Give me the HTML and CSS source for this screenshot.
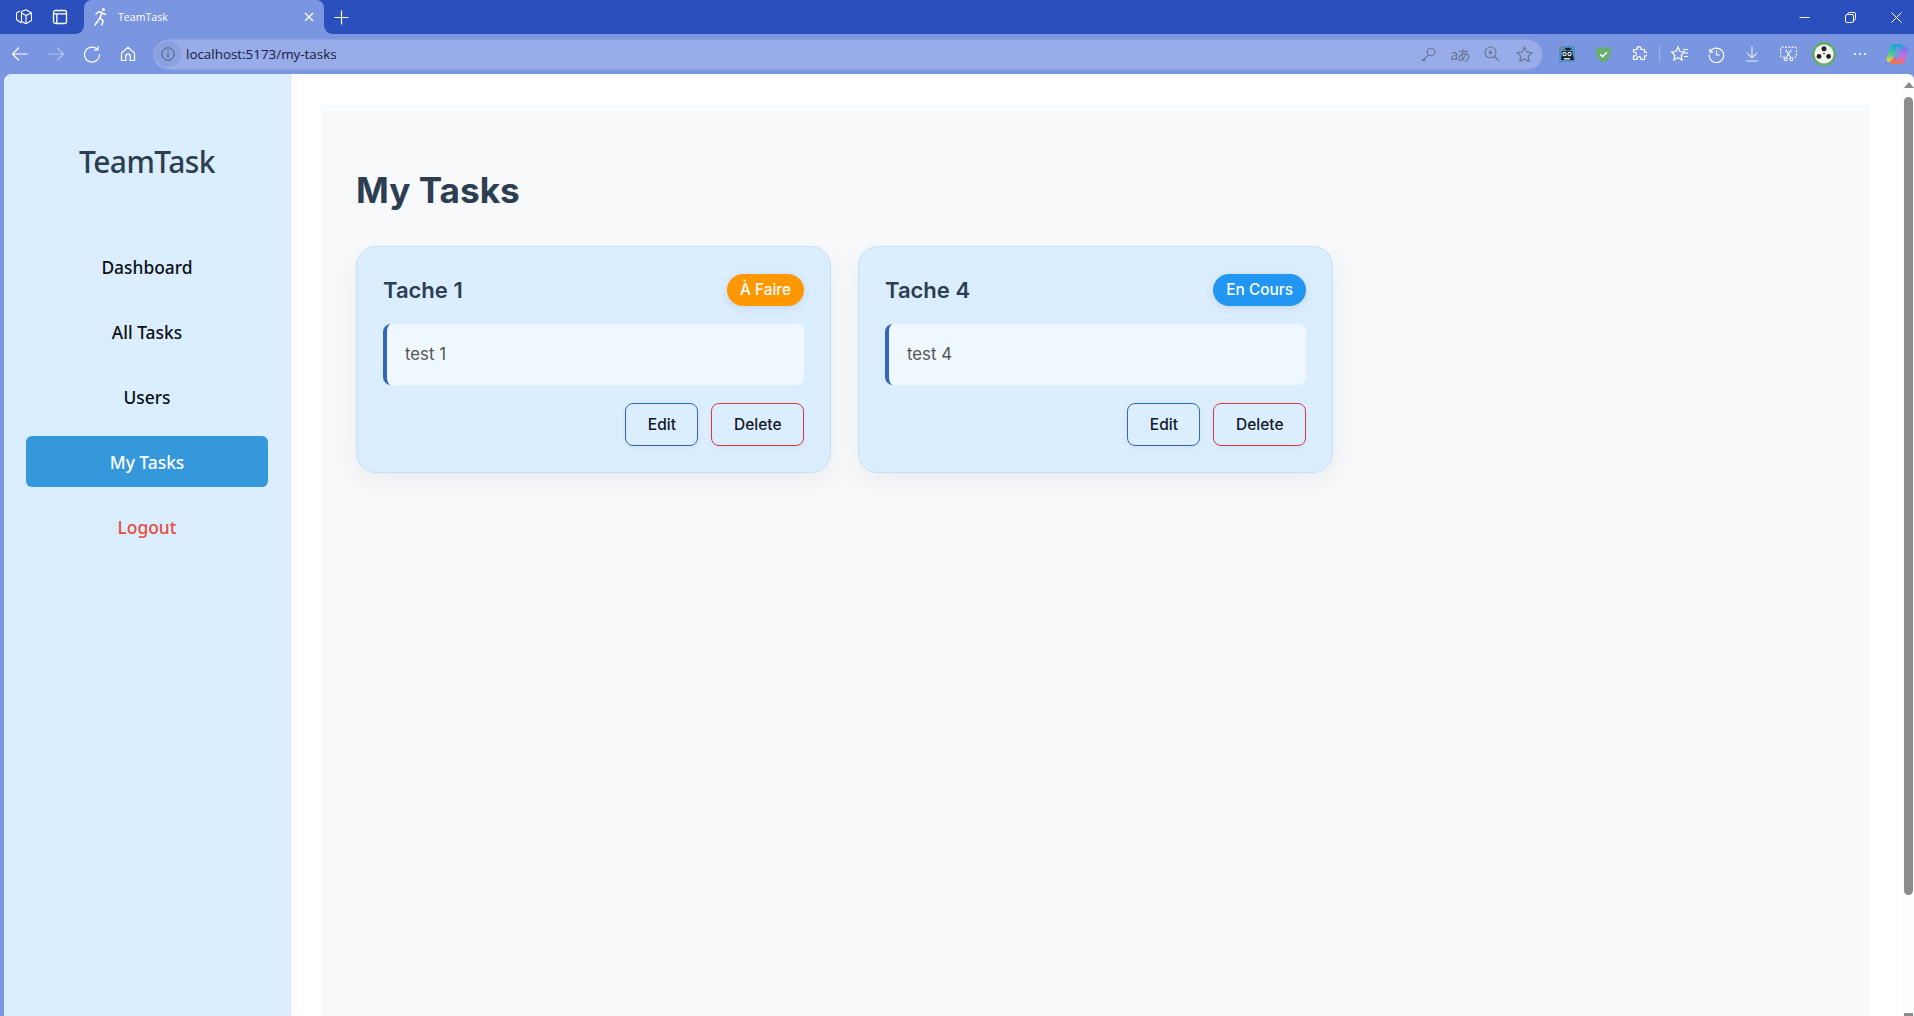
FILE: index.html
```html
<!DOCTYPE html>
<html lang="en">
	<head>
		<meta charset="UTF-8" />
		<meta name="viewport" content="width=device-width, initial-scale=1.0" />
		<title>TeamTask</title>
		<link rel="stylesheet" href="styles.css">
	</head>
	<body>
		<div class="tabstrip">
			<span class="strip-btn first">
				<svg width="18" height="18" viewBox="0 0 18 18" fill="none" stroke="#fff" stroke-width="1.1" stroke-linejoin="round">
					<path d="M6.5 3.5 L11 1.8 L16.5 5 V12.5 L11 15.8 L6.5 13.5 Z" />
					<path d="M11 15.8 V7.5 L16.5 5 M11 7.5 L6.5 5" />
					<path d="M5 3 L1.5 5 V11.5 L6.5 15" />
				</svg>
			</span>
			<span class="strip-btn second">
				<svg width="16" height="16" viewBox="0 0 16 16" fill="none" stroke="#fff" stroke-width="1.3">
					<rect x="1.5" y="1.5" width="13" height="13" rx="2" />
					<path d="M1.5 4.8 H14.5 M4.8 4.8 V14.5" />
				</svg>
			</span>
			<div class="tab">
				<svg class="tab-icon" width="14" height="20" viewBox="0 0 14 20" fill="none" stroke="#fff" stroke-width="1.5" stroke-linecap="round">
					<circle cx="10.5" cy="2.6" r="1.5" fill="#fff" stroke="none" />
					<path d="M3 7 L6 4.5 L9 5.5 L7 11 L2 18" />
					<path d="M9 6 L12.5 7.5 M7 11 L10 13.5 L9 18" />
				</svg>
				<span class="tab-title">TeamTask</span>
				<svg width="10" height="10" viewBox="0 0 10 10" stroke="#fff" stroke-width="1.2">
					<path d="M1 1 L9 9 M9 1 L1 9" />
				</svg>
			</div>
			<span class="new-tab">
				<svg width="15" height="15" viewBox="0 0 15 15" stroke="#fff" stroke-width="1.2">
					<path d="M7.5 0.5 V14.5 M0.5 7.5 H14.5" />
				</svg>
			</span>
			<div class="window-btns">
				<svg width="11" height="11" viewBox="0 0 11 11" stroke="#fff" stroke-width="1">
					<path d="M0.5 5.5 H10.5" />
				</svg>
				<svg width="11" height="11" viewBox="0 0 11 11" fill="none" stroke="#fff" stroke-width="1">
					<rect x="0.5" y="2.5" width="8" height="8" rx="1.5" />
					<path d="M3 2.5 V1.8 A1.3 1.3 0 0 1 4.3 0.5 H9 A1.5 1.5 0 0 1 10.5 2 V6.7 A1.3 1.3 0 0 1 8.5 8" />
				</svg>
				<svg width="11" height="11" viewBox="0 0 11 11" stroke="#fff" stroke-width="1">
					<path d="M0.5 0.5 L10.5 10.5 M10.5 0.5 L0.5 10.5" />
				</svg>
			</div>
		</div>

		<div class="toolbar">
			<span class="tool-btn">
				<svg width="18" height="18" viewBox="0 0 18 18" fill="none" stroke="#fff" stroke-width="1.2">
					<path d="M1.5 9 H16.5 M8 2.5 L1.5 9 L8 15.5" />
				</svg>
			</span>
			<span class="tool-btn">
				<svg width="18" height="18" viewBox="0 0 18 18" fill="none" stroke="#b4c3ee" stroke-width="1.2">
					<path d="M1.5 9 H16.5 M10 2.5 L16.5 9 L10 15.5" />
				</svg>
			</span>
			<span class="tool-btn">
				<svg width="18" height="18" viewBox="0 0 18 18" fill="none" stroke="#fff" stroke-width="1.2">
					<path d="M14.5 4.5 A7.5 7.5 0 1 0 16.5 9" />
					<path d="M15 1 V5 H11" />
				</svg>
			</span>
			<span class="tool-btn">
				<svg width="16" height="16" viewBox="0 0 16 16" fill="none" stroke="#fff" stroke-width="1.2">
					<path d="M1.5 7 L8 1.2 L14.5 7 V14.5 H10.2 V10 A2.2 2.2 0 0 0 5.8 10 V14.5 H1.5 Z" />
				</svg>
			</span>
			<div class="address-bar">
				<span class="site-info">
					<svg width="14" height="14" viewBox="0 0 14 14" fill="none" stroke="#4a5778" stroke-width="1">
						<circle cx="7" cy="7" r="6.2" />
						<path d="M7 6 V10.5 M7 3.5 V4.8" />
					</svg>
				</span>
				<span class="url">localhost:5173/my-tasks</span>
				<div class="address-icons">
					<span class="addr-slot">
						<svg width="15" height="15" viewBox="0 0 15 15" fill="none" stroke="#68748f" stroke-width="1.1">
							<circle cx="10" cy="5" r="3.8" />
							<path d="M7.2 7.8 L1.5 13.5 H3.5 L4.5 12 M10.5 4.5 h0.1" />
						</svg>
					</span>
					<span class="addr-slot translate-glyph">aあ</span>
					<span class="addr-slot">
						<svg width="16" height="16" viewBox="0 0 16 16" fill="none" stroke="#68748f" stroke-width="1.1">
							<circle cx="6.5" cy="6.5" r="5.5" />
							<path d="M10.5 10.5 L15 15 M6.5 4 V9 M4 6.5 H9" />
						</svg>
					</span>
					<span class="addr-slot">
						<svg width="17" height="17" viewBox="0 0 17 17" fill="none" stroke="#68748f" stroke-width="1.1">
							<path d="M8.5 1 L10.8 6 L16 6.6 L12.2 10.2 L13.2 15.6 L8.5 12.9 L3.8 15.6 L4.8 10.2 L1 6.6 L6.2 6 Z" />
						</svg>
					</span>
				</div>
			</div>
			<div class="ext-icons">
				<span class="ext-slot">
					<svg width="16" height="16" viewBox="0 0 16 16">
						<rect width="16" height="16" fill="#4a93c4" />
						<path d="M3 5 H13 L15 14 H2 Z" fill="#1d2230" />
						<circle cx="5.5" cy="8" r="2.2" fill="#dfe6ee" />
						<circle cx="10.5" cy="8" r="2.2" fill="#dfe6ee" />
						<circle cx="5.5" cy="8" r="1" fill="#111" />
						<circle cx="10.5" cy="8" r="1" fill="#111" />
						<path d="M5 3 L9 1.5 L13 3 L9 4.5 Z" fill="#111" />
						<rect x="1.5" y="1" width="2" height="2" fill="#e8642c" />
						<rect x="5" y="12" width="6" height="1.5" fill="#dfe6ee" />
					</svg>
				</span>
				<span class="ext-slot">
					<svg width="17" height="17" viewBox="0 0 16 16">
						<path d="M8 1 C5 1 2.5 2 0.5 3 C0.5 9 3 13.5 8 15.5 C13 13.5 15.5 9 15.5 3 C13.5 2 11 1 8 1 Z" fill="#68ae6f" />
						<path d="M4.8 7.8 L7.2 10 L11.2 5.8" fill="none" stroke="#fff" stroke-width="1.4" />
					</svg>
				</span>
				<span class="ext-slot">
					<svg width="16" height="16" viewBox="0 0 16 16" fill="none" stroke="#fff" stroke-width="1.2" stroke-linejoin="round">
						<path d="M2.5 3.5 H6.2 A2 2 0 1 1 9.8 3.5 H13.5 V6.2 A2 2 0 1 1 13.5 9.8 V13.5 H9.8 A2 2 0 1 0 6.2 13.5 H2.5 V9.8 A2 2 0 1 0 2.5 6.2 Z" />
					</svg>
				</span>
				<span class="tool-divider"></span>
				<span class="ext-slot">
					<svg width="18" height="16" viewBox="0 0 18 16" fill="none" stroke="#fff" stroke-width="1.2">
						<path d="M7 1 L9 5.5 L13.5 6 L10.2 9.2 L11 14 L7 11.6 L3 14 L3.8 9.2 L0.5 6 L5 5.5 Z" />
						<path d="M12 3.5 H17 M14 7 H17 M13 10.5 H17" />
					</svg>
				</span>
				<span class="ext-slot">
					<svg width="17" height="17" viewBox="0 0 18 18" fill="none" stroke="#fff" stroke-width="1.2">
						<path d="M2 3 V6.5 H5.5 M2.2 6.2 A7.7 7.7 0 1 1 1.3 9" />
						<path d="M9 4.8 V9.5 H12.5" />
					</svg>
				</span>
				<span class="ext-slot">
					<svg width="14" height="16" viewBox="0 0 14 16" fill="none" stroke="#dfe6fa" stroke-width="1.2">
						<path d="M7 0.5 V11.5 M2 6.8 L7 11.8 L12 6.8 M1 15 H13" />
					</svg>
				</span>
				<span class="ext-slot">
					<svg width="17" height="16" viewBox="0 0 18 16" fill="none" stroke="#fff" stroke-width="1.1">
						<path d="M5 11.5 H2 A1.3 1.3 0 0 1 0.7 10.2 V2 A1.3 1.3 0 0 1 2 0.7 H16 A1.3 1.3 0 0 1 17.3 2 V10.2 A1.3 1.3 0 0 1 16 11.5 H13" stroke-dasharray="2.2 1.4" />
						<path d="M6 3.5 L11.5 12 M12 3.5 L6.5 12" />
						<circle cx="6" cy="13.5" r="1.6" />
						<circle cx="12" cy="13.5" r="1.6" />
					</svg>
				</span>
				<span class="ext-slot">
					<svg width="24" height="24" viewBox="0 0 24 24">
						<circle cx="12" cy="12" r="12" fill="#62ab69" />
						<circle cx="12" cy="12" r="9.6" fill="#f5f5f2" />
						<circle cx="12" cy="6.7" r="2.5" fill="#222" />
						<circle cx="7" cy="14.4" r="2.4" fill="#222" />
						<circle cx="16.6" cy="14.4" r="2.4" fill="#222" />
						<circle cx="12" cy="11.5" r="0.9" fill="#555" />
					</svg>
				</span>
				<span class="ext-slot">
					<svg width="14" height="4" viewBox="0 0 14 4" fill="#fff">
						<circle cx="2" cy="2" r="1.1" />
						<circle cx="7" cy="2" r="1.1" />
						<circle cx="12" cy="2" r="1.1" />
					</svg>
				</span>
				<span class="ext-slot copilot">
					<svg width="23" height="22" viewBox="0 0 23 22">
						<defs>
							<linearGradient id="copilotLeft" x1="0.6" y1="0" x2="0.2" y2="1">
								<stop offset="0" stop-color="#1a9fe0" />
								<stop offset="0.55" stop-color="#3cc6a0" />
								<stop offset="1" stop-color="#f4cf3a" />
							</linearGradient>
							<linearGradient id="copilotRight" x1="0.6" y1="0" x2="0.3" y2="1">
								<stop offset="0" stop-color="#6f7cf2" />
								<stop offset="0.5" stop-color="#d565d8" />
								<stop offset="1" stop-color="#f6703f" />
							</linearGradient>
						</defs>
						<path d="M7 1 H14 C16 1 17 2.2 17.6 4 L19 8 H14 L13 4.8 C12.6 3.6 11.8 3.2 11 3.8 L7 16 C6.4 17.8 5 19 3 19 C1 19 0.2 17 0.8 15 L4 4 C4.5 2 5.5 1 7 1 Z" fill="url(#copilotLeft)" />
						<path d="M15 6 C16 4.4 17.2 3.6 19 3.6 C21.4 3.6 22.6 5.4 22 7.6 L19 18 C18.5 20 17.4 21 15.6 21 H7 C5 21 4.4 19.4 5 18 L8 14 H10 L11 17 C11.4 18.2 12.4 18.4 13 17.4 Z" fill="url(#copilotRight)" />
					</svg>
				</span>
			</div>
		</div>

		<div class="viewport">
			<div class="page">
				<aside class="sidebar">
					<h2 class="brand">TeamTask</h2>
					<nav class="nav">
						<a class="nav-link">Dashboard</a>
						<a class="nav-link">All Tasks</a>
						<a class="nav-link">Users</a>
						<a class="nav-link active">My Tasks</a>
						<a class="nav-link logout">Logout</a>
					</nav>
				</aside>
				<main class="main">
					<div class="panel">
						<h1 class="page-title">My Tasks</h1>
						<div class="task-grid">
							<div class="task-card">
								<div class="task-head">
									<h3 class="task-title">Tache 1</h3>
									<span class="badge todo">À Faire</span>
								</div>
								<p class="task-desc">test 1</p>
								<div class="task-actions">
									<button class="btn edit">Edit</button>
									<button class="btn delete">Delete</button>
								</div>
							</div>
							<div class="task-card">
								<div class="task-head">
									<h3 class="task-title">Tache 4</h3>
									<span class="badge doing">En Cours</span>
								</div>
								<p class="task-desc">test 4</p>
								<div class="task-actions">
									<button class="btn edit">Edit</button>
									<button class="btn delete">Delete</button>
								</div>
							</div>
						</div>
					</div>
				</main>
			</div>
			<div class="scrollbar">
				<span class="scroll-up"></span>
				<span class="scroll-thumb"></span>
				<span class="scroll-down"></span>
			</div>
		</div>
	</body>
</html>
```

FILE: styles.css
```css
:root {
	--strip-blue: #2b50bd;
	--frame-blue: #7b96e1;
	--sidebar-blue: #dbeeff;
	--ink: #2c3e50;
}

* {
	box-sizing: border-box;
	margin: 0;
	padding: 0;
}

html,
body {
	height: 100%;
	overflow: hidden;
}

body {
	display: flex;
	flex-direction: column;
	font-family: Inter, "Liberation Sans", sans-serif;
	background-color: var(--frame-blue);
}

/* browser chrome */

.tabstrip {
	display: flex;
	align-items: center;
	height: 34px;
	background-color: var(--strip-blue);
}

.strip-btn {
	display: flex;
}

.strip-btn.first {
	margin-left: 15px;
}

.strip-btn.second {
	margin-left: 19px;
}

.tab {
	position: relative;
	display: flex;
	align-items: center;
	width: 240px;
	height: 34px;
	margin-left: 16px;
	padding: 0 10px 0 9px;
	background-color: var(--frame-blue);
	border-radius: 8px 8px 0 0;
}

.tab::before,
.tab::after {
	content: "";
	position: absolute;
	bottom: 0;
	width: 8px;
	height: 8px;
}

.tab::before {
	left: -8px;
	background: radial-gradient(circle at 0 0, var(--strip-blue) 7.5px, var(--frame-blue) 8px);
}

.tab::after {
	right: -8px;
	background: radial-gradient(circle at 100% 0, var(--strip-blue) 7.5px, var(--frame-blue) 8px);
}

.tab-title {
	flex: 1;
	margin-left: 11px;
	font-family: "Open Sans", sans-serif;
	font-size: 10.6px;
	color: #fff;
}

.new-tab {
	display: flex;
	margin-left: 10px;
}

.window-btns {
	display: flex;
	gap: 35px;
	margin-left: auto;
	padding-right: 12px;
}

.toolbar {
	display: flex;
	align-items: center;
	height: 40px;
	padding-left: 2px;
	background-color: var(--frame-blue);
}

.tool-btn {
	display: flex;
	justify-content: center;
	width: 36px;
}

.address-bar {
	display: flex;
	align-items: center;
	flex: none;
	width: 1390px;
	height: 31px;
	margin-left: 7px;
	background-color: #97ace8;
	border: 1px solid #8ba1e0;
	border-radius: 16px;
}

.site-info {
	display: flex;
	justify-content: center;
	align-items: center;
	width: 26px;
	height: 26px;
	margin-left: 1px;
	background-color: #8aa0df;
	border-radius: 50%;
}

.url {
	margin-left: 5px;
	font-family: "Open Sans", sans-serif;
	font-size: 13.4px;
	color: #14213d;
}

.address-icons {
	display: flex;
	align-items: center;
	margin-left: auto;
	padding-right: 2px;
}

.addr-slot {
	display: flex;
	justify-content: center;
	align-items: center;
	width: 32px;
}

.translate-glyph {
	font-family: "Noto Sans CJK JP", sans-serif;
	font-size: 13.5px;
	letter-spacing: -1px;
	color: #68748f;
}

.ext-icons {
	display: flex;
	align-items: center;
	flex: 1;
	padding-left: 6px;
}

.ext-slot {
	display: flex;
	flex: none;
	justify-content: center;
	width: 36px;
}

.ext-slot.copilot {
	width: 34px;
	margin-left: 2px;
}

.tool-divider {
	flex: none;
	width: 1px;
	height: 16px;
	margin: 0 2px;
	background-color: #9fb2ea;
}

.viewport {
	display: flex;
	flex: 1;
	min-height: 0;
	padding-left: 4px;
}

.page {
	display: flex;
	flex: 1;
	min-width: 0;
	background-color: #fff;
	border-top-left-radius: 8px;
	overflow: hidden;
}

.scrollbar {
	display: flex;
	flex-direction: column;
	align-items: center;
	width: 13px;
	padding-left: 2px;
	background-color: #fdfdfd;
	border-top-right-radius: 6px;
}

.scroll-up {
	width: 0;
	height: 0;
	margin-top: 8px;
	border-left: 5px solid transparent;
	border-right: 5px solid transparent;
	border-bottom: 6px solid #8c8c8c;
}

.scroll-thumb {
	width: 9px;
	height: 798px;
	margin-top: 9px;
	background-color: #8c8c8c;
	border-radius: 5px;
}

.scroll-down {
	width: 9px;
	height: 3px;
	margin-top: auto;
	background-color: #8c8c8c;
}

/* sidebar */

.sidebar {
	flex: none;
	width: 287px;
	padding: 0 22px;
	background-color: var(--sidebar-blue);
	border-right: 1px solid #e2e4e8;
	box-shadow: 2px 0 8px rgba(0, 0, 0, 0.04);
	font-family: "Noto Sans", sans-serif;
}

.brand {
	margin-top: 66px;
	font-size: 30px;
	font-weight: 500;
	letter-spacing: -0.55px;
	line-height: 44px;
	text-align: center;
	color: var(--ink);
}

.nav {
	display: flex;
	flex-direction: column;
	gap: 14px;
	margin-top: 57px;
}

.nav-link {
	display: block;
	height: 51px;
	font-size: 17.4px;
	font-weight: 500;
	line-height: 53px;
	text-align: center;
	color: #0b0f14;
	border-radius: 6px;
}

.nav-link.active {
	color: #fff;
	background-color: #3498db;
}

.nav-link.logout {
	color: #e74c3c;
}

/* main */

.main {
	flex: 1;
	min-width: 0;
	padding: 31px 31px 0 30px;
}

.panel {
	height: 100%;
	padding: 63px 35px 35px;
	background-color: #f8f9fa;
}

.page-title {
	font-size: 35.2px;
	font-weight: 700;
	line-height: 44px;
	color: var(--ink);
}

.task-grid {
	display: grid;
	grid-template-columns: repeat(auto-fill, 475px);
	gap: 27px;
	margin-top: 34px;
}

.task-card {
	padding: 27px 26px 26px;
	background-color: #dbeeff;
	border: 1px solid #c4e0f9;
	border-radius: 20px;
	box-shadow: 0 8px 24px rgba(0, 0, 0, 0.06);
}

.task-head {
	display: flex;
	align-items: center;
	justify-content: space-between;
}

.task-title {
	font-size: 22px;
	font-weight: 600;
	line-height: 31px;
	color: var(--ink);
}

.badge {
	padding: 0 13px;
	font-size: 15.4px;
	font-weight: 500;
	line-height: 32px;
	color: #fff;
	border-radius: 16px;
	box-shadow: 0 2px 8px rgba(0, 0, 0, 0.1);
}

.badge.todo {
	background-color: #ff9800;
}

.badge.doing {
	background-color: #2196f3;
}

.task-desc {
	height: 61px;
	margin-top: 18px;
	padding: 0 18px;
	font-size: 16.8px;
	line-height: 61px;
	color: #555;
	background-color: #f0f8ff;
	border-left: 4px solid #3366b8;
	border-radius: 8px;
}

.task-actions {
	display: flex;
	justify-content: flex-end;
	gap: 13px;
	margin-top: 18px;
}

.btn {
	height: 43px;
	padding: 0 21.5px;
	font-family: inherit;
	font-size: 15.5px;
	font-weight: 450;
	color: #14181f;
	background-color: transparent;
	border-radius: 8px;
	box-shadow: 0 2px 5px rgba(0, 0, 0, 0.05);
}

.btn.edit {
	border: 1px solid #3366b8;
}

.btn.delete {
	border: 1px solid #dc3545;
}
```
